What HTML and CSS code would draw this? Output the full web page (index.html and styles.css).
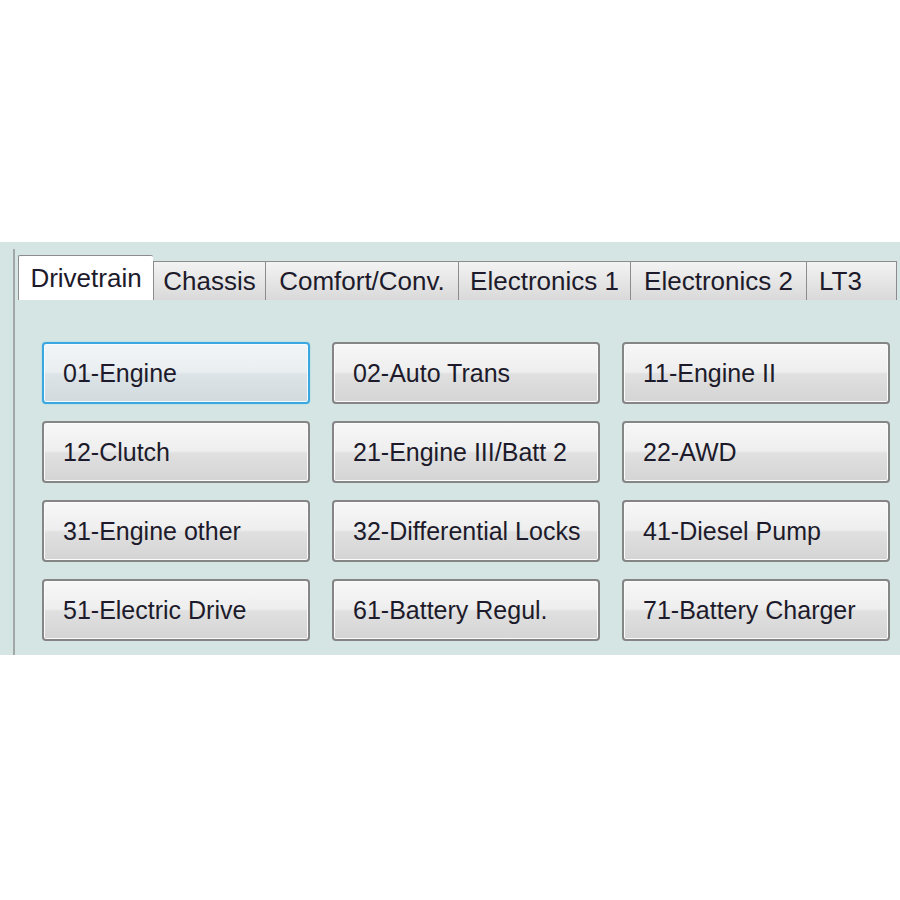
FILE: index.html
```html
<!doctype html>
<html lang="en">
<head>
    <meta charset="UTF-8">
    <title>Select Control Module</title>
    <link rel="stylesheet" href="styles.css">
</head>
<body>
<div class="panel">
    <div class="frame">
        <ul class="tabs">
            <li class="tab active t-drive">Drivetrain</li>
            <li class="tab t-chassis">Chassis</li>
            <li class="tab t-comfort">Comfort/Conv.</li>
            <li class="tab t-elec1">Electronics 1</li>
            <li class="tab t-elec2">Electronics 2</li>
            <li class="tab last">LT3</li>
        </ul>
        <div class="modules">
            <div class="btn focus">01-Engine</div>
            <div class="btn">02-Auto Trans</div>
            <div class="btn">11-Engine II</div>
            <div class="btn">12-Clutch</div>
            <div class="btn">21-Engine III/Batt 2</div>
            <div class="btn">22-AWD</div>
            <div class="btn">31-Engine other</div>
            <div class="btn">32-Differential Locks</div>
            <div class="btn">41-Diesel Pump</div>
            <div class="btn">51-Electric Drive</div>
            <div class="btn">61-Battery Regul.</div>
            <div class="btn">71-Battery Charger</div>
        </div>
    </div>
</div>
</body>
</html>
```

FILE: styles.css
```css
*{
    padding: 0;
    margin: 0;
    box-sizing: border-box;
}
body{
    background: #ffffff;
    font-family: "Liberation Sans", Arial, sans-serif;
    color: #1d1b2b;
}
li{
    list-style: none;
}
.panel{
    margin-top: 242px;
    height: 413px;
    background: #d5e5e3;
    padding-top: 7px;
}
.frame{
    margin-left: 13px;
    height: 406px;
    border-left: 2px solid #a2a8a8;
    padding-left: 3px;
}
.tabs{
    display: flex;
    align-items: flex-end;
    height: 51px;
}
.tab{
    height: 39px;
    line-height: 38px;
    font-size: 26px;
    text-align: center;
    border: 1px solid #8c8c8c;
    border-right: none;
    border-bottom: none;
    background: linear-gradient(#f3f3f3, #e6e6e6 50%, #d9d9d9);
    white-space: nowrap;
}
.tab.active{
    height: 45px;
    line-height: 44px;
    background: #ffffff;
    border-radius: 2px 2px 0 0;
}
.t-drive{ width: 135px; }
.t-chassis{ width: 112px; }
.t-comfort{ width: 193px; }
.t-elec1{ width: 172px; }
.t-elec2{ width: 176px; }
.tab.last{
    width: 91px;
    text-align: left;
    padding-left: 12px;
    border-right: 1px solid #8c8c8c;
}
.modules{
    margin: 42px 0 0 24px;
    display: grid;
    grid-template-columns: 268px 268px 268px;
    grid-auto-rows: 62px;
    column-gap: 22px;
    row-gap: 17px;
}
.btn{
    display: flex;
    align-items: center;
    padding-left: 19px;
    font-size: 25px;
    border: 2px solid #858585;
    border-radius: 4px;
    background: linear-gradient(#f7f7f7, #eeeeee 48%, #e0e0e0 52%, #d4d4d4);
    box-shadow: inset 0 0 0 1px #fbfbfb;
}
.btn.focus{
    border-color: #3aa8de;
    background: linear-gradient(#f1f5f7, #e9eef1 48%, #dde4e8 52%, #d2dade);
    box-shadow: inset 0 0 0 1px #f4fbff, 0 0 2px #9bd3ef;
}
```
